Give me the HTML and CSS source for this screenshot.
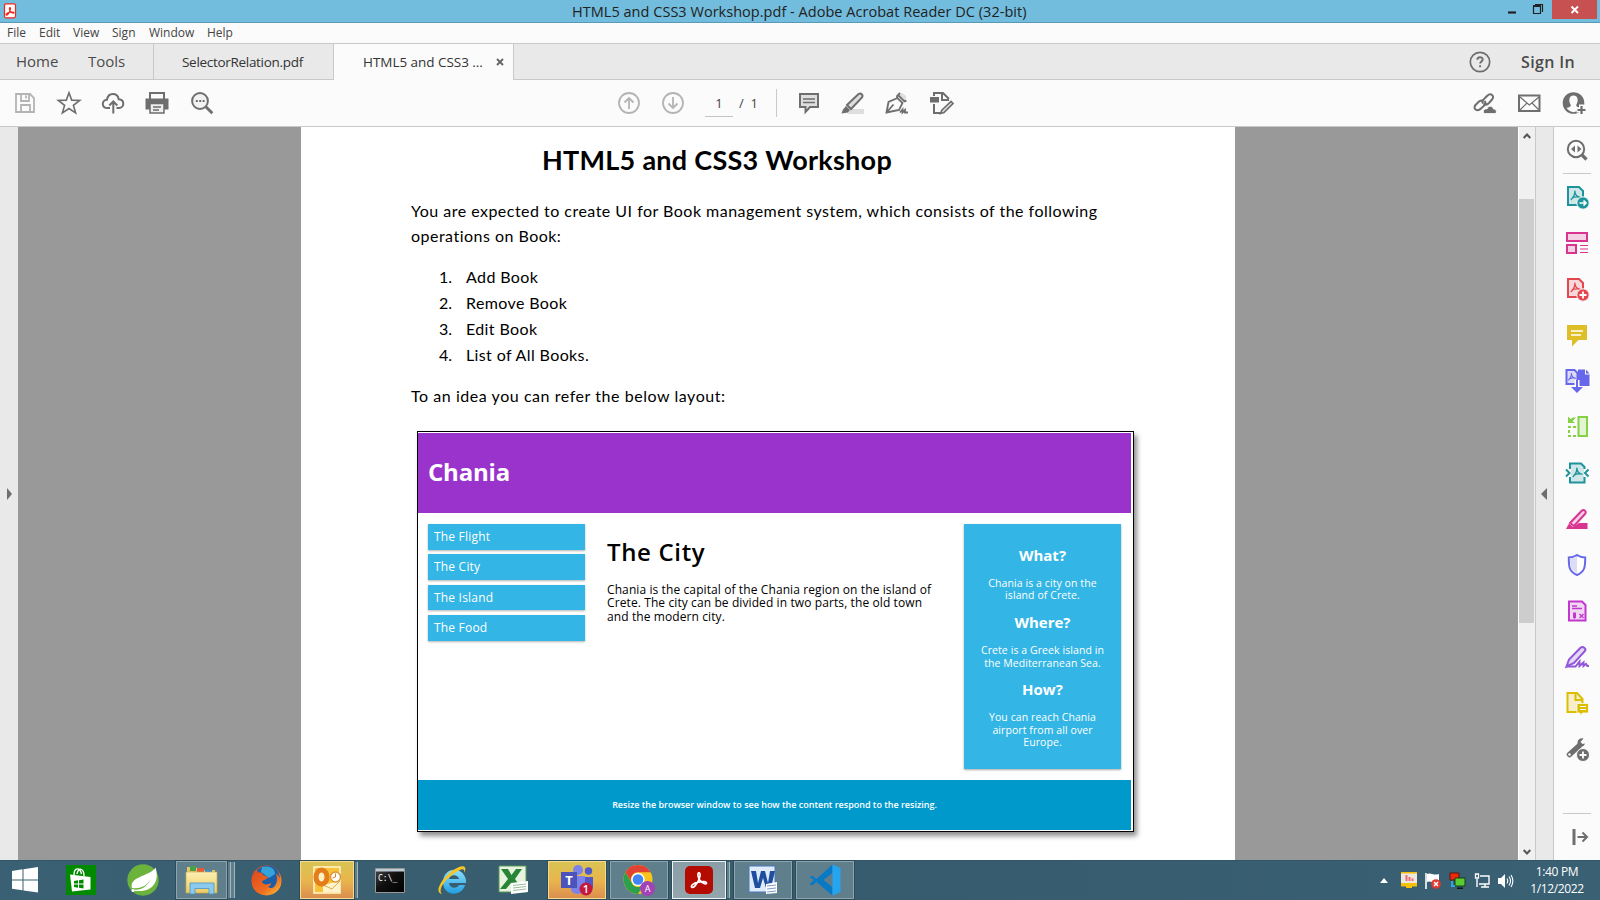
FILE: index.html
```html
<!DOCTYPE html>
<html lang="en">
<head>
<meta charset="utf-8">
<title>HTML5 and CSS3 Workshop.pdf - Adobe Acrobat Reader DC (32-bit)</title>
<link rel="stylesheet" href="styles.css">
</head>
<body>
<svg class="defs" width="0" height="0">
  <defs>
    <linearGradient id="ffx" x1="0" y1="0" x2="1" y2="1"><stop offset="0" stop-color="#e0491f"/><stop offset=".6" stop-color="#ee6b20"/><stop offset="1" stop-color="#fbc53a"/></linearGradient>
    <linearGradient id="ieb" x1="0" y1="0" x2="0" y2="1"><stop offset="0" stop-color="#8fe0fb"/><stop offset="1" stop-color="#1f9fe2"/></linearGradient>
    <linearGradient id="fold" x1="0" y1="0" x2="0" y2="1"><stop offset="0" stop-color="#fdf0b4"/><stop offset="1" stop-color="#eccb63"/></linearGradient>
    <linearGradient id="cmdg" x1="0" y1="0" x2="1" y2="1"><stop offset="0" stop-color="#4a4a4a"/><stop offset=".45" stop-color="#111"/><stop offset="1" stop-color="#000"/></linearGradient>
    <g id="acro"><path d="M12 5.2c1.500 0 1.300 3.600-.6 7.200-1.700 3.300-4.200 6.600-5.700 5.700-1.600-1 1.300-3.600 5.600-4.600 3.900-.9 7.700-.6 7.500.9-.2 1.500-3.800.3-6-2.600-1.900-2.500-2.300-6.600-.8-6.600z" fill="none"/></g>
    <g id="tri"><path d="M11.500 5c.5 4-.5 8-5.500 13M11.700 6c0 4 2.500 7.500 7.500 8.500M7.500 15.500c3-2 6-2.500 11.500-1.500" fill="none"/></g>
  </defs>
</svg>
<div class="titlebar">
  <svg class="app" width="12" height="16" viewBox="0 0 12 16"><rect x=".5" y=".8" width="11" height="14" rx="1.500" fill="#fff" stroke="#f0281c" stroke-width="1.200"/><use href="#acro" transform="translate(-1 1.500) scale(.58)" stroke="#f0281c" stroke-width="2"/></svg>
  <div class="caption">HTML5 and CSS3 Workshop.pdf - Adobe Acrobat Reader DC (32-bit)</div>
  <div class="winbtns">
    <svg width="44" height="22" viewBox="0 0 44 22"><path d="M0 12.500h8" stroke="#222" stroke-width="2.200"/><path d="M25.500 6.500h7v7h-7z M27 4.500h7.500V12" fill="none" stroke="#222" stroke-width="1.200"/><path d="M25 6h8" stroke="#222" stroke-width="2"/></svg>
    <div class="close"><svg width="10" height="10" viewBox="0 0 10 10"><path d="M1.500 1.500l6.500 6.500M8 1.500L1.500 8" stroke="#fff" stroke-width="1.900"/></svg></div>
  </div>
</div>
<div class="menubar"><span>File</span><span>Edit</span><span>View</span><span>Sign</span><span>Window</span><span>Help</span></div>
<div class="tabs">
  <div class="main"><span>Home</span><span>Tools</span></div>
  <div class="tab">SelectorRelation.pdf</div>
  <div class="tab active"><span>HTML5 and CSS3 ...</span><svg width="8" height="8" viewBox="0 0 8 8"><path d="M1 1l6 6M7 1L1 7" stroke="#666" stroke-width="1.900"/></svg></div>
  <div class="tabend">
    <svg width="22" height="22" viewBox="0 0 22 22"><circle cx="11" cy="11" r="9.700" fill="none" stroke="#6e6e6e" stroke-width="1.700"/><path d="M8.300 8.800c0-3.500 5.400-3.300 5.400-.3 0 2-2.600 2-2.600 4.100M11.100 14.300v2" fill="none" stroke="#6e6e6e" stroke-width="1.900"/></svg>
    <span>Sign In</span>
  </div>
</div>
<div class="toolbar">
  <svg class="i light" viewBox="0 0 24 24"><path d="M3 3h14l4 4v14H3z"/><path d="M8 3v7h8V3M13 4.500v3M8 21v-7h9v7"/></svg>
  <svg class="i" viewBox="0 0 24 24"><path d="M12 1.800l2.700 7.300 8 .3-6.300 4.900 2.200 7.500-6.600-4.300-6.600 4.300 2.200-7.500-6.300-4.900 8-.3z" stroke-width="1.600"/></svg>
  <svg class="i" viewBox="0 0 24 24"><path d="M9 17H6.500C.3 17 .3 9 6 8.700 7.300 1 16.500 1.500 17.700 8.200 24 8.500 23.500 17 18 17h-2.500M12.300 22.500V11M8.300 14.500l4-4 4 4"/></svg>
  <svg class="i" viewBox="0 0 24 24"><path d="M5 8V2h14v6"/><path d="M1.500 8.500h21v9h-3V13h-15v4.500h-3z" fill="#6e6e6e"/><path d="M5 12.500h14V22H5zM8 16h8M8 19h6" fill="#eee" stroke-width="1.500"/></svg>
  <svg class="i" viewBox="0 0 24 24"><circle cx="10" cy="10" r="7.900" fill="#f2f2f2"/><path d="M15.800 15.800l6.500 6.500" stroke-width="3"/><path d="M5.800 10h2M9.200 10h2M12.600 10h2"/></svg>
  <svg class="i light" viewBox="0 0 24 24"><circle cx="12" cy="12" r="10"/><path d="M12 18V7.500M7.500 11.500L12 7l4.500 4.500"/></svg>
  <svg class="i light" viewBox="0 0 24 24"><circle cx="12" cy="12" r="10"/><path d="M12 6v10.500M7.500 12.500L12 17l4.500-4.500"/></svg>
  <div class="pg">1</div>
  <div class="of">/&nbsp; 1</div>
  <div class="vsep"></div>
  <svg class="i" viewBox="0 0 24 24"><path d="M3 3h18v13h-8l-4.500 5v-5H3z" fill="#dedede"/><path d="M6 8h12M6 11.500h12" stroke-width="1.500"/></svg>
  <svg class="i" viewBox="0 0 24 24"><path d="M10 18h13v5H6z" fill="#dedede" stroke="none"/><path d="M6 14L17.500 3c2.500-1.500 5 1 3.500 3.500L10 18z" fill="#dedede"/><path d="M5 15l4 4-2 2.500-6.500 1 1.500-4z" fill="#6e6e6e" stroke="none"/></svg>
  <svg class="i" viewBox="0 0 24 24"><path d="M13 3l8 8V5l-4-3z" fill="#dedede" stroke="none"/><path d="M1.500 21.500L3.500 11l9-4 5 5-3.500 7zM1.500 21.500l7-8M12 7.500V5l3-3M13 4l6.500 6.500 2-1" stroke-width="1.800"/><path d="M15 21.500l2.500-3v3l2.500-2.500v2.500h3" stroke-width="1.800"/></svg>
  <svg class="i" viewBox="0 0 24 24"><path d="M5 5V2h9l6 6M13 2v7h7M5 13v9h6"/><rect x="1" y="6" width="9" height="5.500" fill="#6e6e6e" stroke="none"/><path d="M13 19l9-8.500 2 2-9 9-3.500 1z" stroke-width="1.700" fill="#dedede"/></svg>
  <svg class="i" viewBox="0 0 24 24"><path d="M11 12.500c-2-3 1-4 4-7.500 4-4 8 0 5 3.500l-3 3.500c-2 2-4 2-5.500.5M12.500 10c3 3 0 4-3.500 7.500-4 4-8.500 0-5.500-3.500L7 10.500c1.500-1.200 3-1.500 4.500-.5"/><path d="M12 22.500c-2-4 1.500-5 3-4.500 1.500-4 6-3 6.500 0 3 0 3.500 3 2 4.500z" fill="#6e6e6e" stroke="#fbfbfb" stroke-width=".8"/></svg>
  <svg class="i" viewBox="0 0 24 24"><path d="M2 4.500h20.500V20H2z"/><path d="M3 6l9.300 8L22 6M3 19l7-7M22 19l-7-7" stroke-width="1.200"/></svg>
  <svg class="i" viewBox="0 0 24 24"><circle cx="11.500" cy="12" r="9.800" fill="#6e6e6e"/><path d="M11.500 4.500c5 0 5 6 2.700 9.500 0 2 1.800 2 4.300 3-4 5.500-10 5.500-14 0 2.500-1 4.300-1 4.300-3-2.300-3.500-2.300-9.500 2.700-9.500z" fill="#fbfbfb" stroke="none"/><path d="M19.500 13.500V24M14.500 19h10" stroke="#fbfbfb" stroke-width="5"/><path d="M19.500 15v8M15.500 19h8" stroke-width="2.200"/></svg>
</div>
<div class="work">
  <div class="leftnav"><svg width="5" height="12" viewBox="0 0 5 12"><path d="M0 0l5 6-5 6z" fill="#6e6e6e"/></svg></div>
  <div class="canvas">
    <div class="page">
      <h1>HTML5 and CSS3 Workshop</h1>
      <p class="intro">You are expected to create UI for Book management system, which consists of the following<br>operations on Book:</p>
      <div class="ops"><b>1.</b><span>Add Book</span><b>2.</b><span>Remove Book</span><b>3.</b><span>Edit Book</span><b>4.</b><span>List of All Books.</span></div>
      <p class="idea">To an idea you can refer the below layout:</p>
      <div class="mock">
        <div class="mhead">Chania</div>
        <div class="mbody">
          <div class="mnav"><div>The Flight</div><div>The City</div><div>The Island</div><div>The Food</div></div>
          <div class="mcity"><h2>The City</h2><p>Chania is the capital of the Chania region on the island of<br>Crete. The city can be divided in two parts, the old town<br>and the modern city.</p></div>
          <div class="mside"><h3>What?</h3><p>Chania is a city on the<br>island of Crete.</p><h3>Where?</h3><p>Crete is a Greek island in<br>the Mediterranean Sea.</p><h3>How?</h3><p>You can reach Chania<br>airport from all over<br>Europe.</p></div>
        </div>
        <div class="mfoot">Resize the browser window to see how the content respond to the resizing.</div>
      </div>
    </div>
  </div>
  <div class="scroll">
    <svg width="8" height="6" viewBox="0 0 8 6"><path d="M.7 5L4 1.500 7.300 5" fill="none" stroke="#555" stroke-width="2"/></svg>
    <div class="track"><div class="thumb"></div></div>
    <svg width="8" height="6" viewBox="0 0 8 6"><path d="M.7 1L4 4.500 7.300 1" fill="none" stroke="#555" stroke-width="2"/></svg>
  </div>
  <div class="collapse"><svg width="6" height="12" viewBox="0 0 6 12"><path d="M6 0L0 6l6 6z" fill="#6e6e6e"/></svg></div>
  <div class="pane">
    <div class="c"><svg class="i" viewBox="0 0 24 24"><circle cx="11" cy="11" r="8.200"/><path d="M17 17l4.500 4.500" stroke-width="3.200"/><path d="M10 7.500v7L6 11zM12.500 7.500v7l4-3.500z" fill="#6e6e6e" stroke="none"/></svg></div>
    <hr>
    <div class="c teal"><svg class="i" viewBox="0 0 24 24"><path d="M3 2h11l4 4v14H3z" class="f"/><use href="#tri" transform="translate(1.500 2) scale(.72)" stroke-width="1.800"/><circle cx="18" cy="18" r="6.200" fill="currentColor" stroke="#fbfbfb" stroke-width="1"/><path d="M14.500 18H21M18.500 15.500L21 18l-2.500 2.500" stroke="#fff" stroke-width="1.700"/></svg></div>
    <div class="c pink"><svg class="i" viewBox="0 0 24 24"><path d="M2 2h20v8H2zM2 14h9v8H2z" class="f"/><path d="M15 14.500h8M15 18h8M15 21.500h8" stroke-width="1"/></svg></div>
    <div class="c red"><svg class="i" viewBox="0 0 24 24"><path d="M3 2h11l4 4v14H3z" class="f"/><use href="#tri" transform="translate(1.500 2) scale(.72)" stroke-width="1.800"/><circle cx="18" cy="18" r="6.200" fill="currentColor" stroke="#fbfbfb" stroke-width="1"/><path d="M14.500 18h7M18 14.500v7" stroke="#fff" stroke-width="1.800"/></svg></div>
    <div class="c yellow"><svg class="i" viewBox="0 0 24 24"><path d="M3 3h18v13h-8l-5 5v-5H3z" fill="currentColor"/><path d="M6 8h12M6 12h10" stroke="#fff" stroke-width="1.500"/></svg></div>
    <div class="c indigo"><svg class="i" viewBox="0 0 24 24"><path d="M1.500 1h8l3 3v11h-11z" class="f"/><use href="#tri" transform="translate(-.3 1) scale(.58)" stroke-width="1.800"/><path d="M13 .5h7v5h4.500V17H13z" class="s"/><path d="M21 .5v4h3.500z" class="s"/><path d="M12 11v12" stroke="#fff" stroke-width="5"/><path d="M12 11v8"/><path d="M6 18h12l-6 6z" class="s"/></svg></div>
    <div class="c green"><svg class="i" viewBox="0 0 24 24"><path d="M13.500 2H22v19h-8.500z" class="f"/><path d="M11 12H4v9h8" stroke-dasharray="3 2"/><path d="M3 1.500V8h7L7.500 6 11 2.500H8L5.500 4z" class="s"/></svg></div>
    <div class="c teal"><svg class="i" viewBox="0 0 24 24"><path d="M6 7h13v10H6z" fill="#cfe7e8" stroke="none"/><path d="M5 8V2.500h11L19.500 6v2M5 16v5.500h14.500V16" class="f"/><use href="#tri" transform="translate(3.500 3) scale(.72)" stroke-width="1.900"/><path d="M1 8.500L4.500 12 1 15.500M23.500 8.500L20 12l3.500 3.500"/></svg></div>
    <div class="c pink"><svg class="i" viewBox="0 0 24 24"><path d="M14 16h8.500v6H5z" class="s"/><path d="M5 16L16.500 4c2.500-2.500 5.500.5 3.500 3L9 19z" class="f"/><path d="M4 16.500l4.500 4L6 22H1z" class="s"/></svg></div>
    <div class="c indigo"><svg class="i" viewBox="0 0 24 24"><path d="M12 2c3 2 5.500 2.500 8.200 2.500 0 8 .3 14-8.200 17.500C3.500 18.500 3.800 12.500 3.800 4.500 6.500 4.500 9 4 12 2z" fill="#fff"/><path d="M12 3.500v17C5.500 17 5 12 5 5.500c2.500 0 5-.5 7-2z" fill="#dcdcf6" stroke="none"/></svg></div>
    <div class="c magenta"><svg class="i" viewBox="0 0 24 24"><path d="M4 2.500h13l3.500 3.500v15.500H4z" class="f"/><path d="M7 7h5M7 9.500h10M14.500 15l4 4M18.500 15l-4 4" stroke-width="1.400"/><path d="M8 13.500h3v5l-1.500 1.500L8 18.500z" class="s"/></svg></div>
    <div class="c violet"><svg class="i" viewBox="0 0 24 24"><path d="M1.500 21.500L4 14.500 15.500 2.800c2.500-2 6 .7 4.500 3.200L9 18z" class="f"/><path d="M1 21.500h9.500l4-5v4.500l4-3.500v3.500l2.500-2 1.500 2H24"/></svg></div>
    <div class="c gold"><svg class="i" viewBox="0 0 24 24"><path d="M2.500 2H12l5.500 6v13H2.500z" class="f"/><path d="M10.500 2v7h7"/><path d="M12 12.500h11.500V22h-6L15 24.500V22h-3z" fill="currentColor" stroke="#fbfbfb" stroke-width=".8"/><path d="M15 15.500h6M15 18.500h6" stroke="#fff" stroke-width="1.200"/></svg></div>
    <div class="c"><svg class="i" viewBox="0 0 24 24"><path d="M4.500 17.500L14 9" stroke-width="5.500" stroke-linecap="round"/><path d="M20 6.500c-1.500 5-8.500 4-7.500-1.200C13 2 16 .5 18.500 1.500L15.500 5l2 2z" class="s"/><circle cx="4.500" cy="17.500" r="1.200" fill="#fff" stroke="none"/><circle cx="18" cy="18" r="6.500" fill="#6e6e6e" stroke="#fbfbfb" stroke-width="1"/><path d="M14.500 18h7M18 14.500v7" stroke="#fff" stroke-width="1.800"/></svg></div>
    <hr class="low">
    <svg class="i out" viewBox="0 0 24 24"><path d="M9 4v16" stroke-width="3"/><path d="M12.500 12h9M17.500 7.500L22 12l-4.500 4.500"/></svg>
  </div>
</div>
<div class="taskbar">
  <div class="apps">
    <div class="t"><svg width="28" height="28" viewBox="0 0 28 28"><path d="M1 5l10.500-1.700v10.200H1zM12.500 3.200L27 1v12.500H12.500zM1 14.500h10.500v9.800L1 22.800zM12.500 14.500H27V26.500l-14.500-2z" fill="#fff"/></svg></div>
    <div class="t"><svg width="30" height="30" viewBox="0 0 30 30"><path d="M0 0h30v30H0z" fill="#008a00"/><path d="M8 10c0-8 6-8 7.500-1M11 9c1-7 7-6 7 2" fill="none" stroke="#fff" stroke-width="1.400"/><path d="M4 9.500l20.500 2.500v12.500L6 26.500z" fill="#fff"/><path d="M8 16l4-.7v3.200H8zM13 15.200l4.500-.7v4H13zM8 19.500h4v3.200L8 22zM13 19.500h4.500v4l-4.500-.7z" fill="#008a00"/></svg></div>
    <div class="t"><svg width="32" height="32" viewBox="0 0 32 32"><circle cx="16" cy="16" r="15.700" fill="#6cb33e"/><path d="M28.500 3.500C33 17 26 30 6 26.500-1 12 23 13 28.500 3.500z" fill="#fff"/><path d="M3 24.500c6 2.500 15 2 21-9.500-5 8-12 10-18.500 9z" fill="#6cb33e"/><circle cx="6" cy="26.500" r="1.500" fill="#fff"/></svg></div>
    <div class="t b stack2"><svg width="34" height="32" viewBox="0 0 34 32"><path d="M2 3h9l2 3h17v22H2z" fill="#e5c763"/><path d="M5 2h6v5H5z" fill="#45a14a"/><path d="M12 4h7v4h-7z" fill="#e45c3c"/><path d="M20 6h7v4h-7z" fill="#3688d8"/><path d="M1 8h31v21H1z" fill="url(#fold)" stroke="#cba84a" stroke-width=".7"/><path d="M5 30V19h24v11h-5v-5.500H10V30z" fill="#8acbed" stroke="#4895c6" stroke-width=".8"/></svg></div>
    <div class="t"><svg width="31" height="31" viewBox="0 0 31 31"><circle cx="15.500" cy="15.500" r="15" fill="url(#ffx)"/><path d="M6 5C14-3 26 1 28 9c3 9-3 15-9 14l-9-5z" fill="#1e5da8"/><path d="M11 2c7-2 13 1 13 7l-6 4-8-6z" fill="#36a2da"/><path d="M3 6l3 2c3-2 6 0 6 2l5 2c-1 3-6 3-6 5 2 4 7 2 9 1 0 4-5 5-8 4 8 6 17-2 13-14 6 6 7 12 1 18C18 33 0 31 1 15z" fill="url(#ffx)"/></svg></div>
    <div class="t b hot stack1"><svg width="32" height="32" viewBox="0 0 32 32"><path d="M3 3h26v26H3z" fill="#f8c238" stroke="#fff6cf" stroke-width="1.500"/><path d="M12 21l17-4v11H12z" fill="#fff3cc"/><path d="M12 21l9 4 8-8" fill="none" stroke="#deab4c"/><ellipse cx="10.500" cy="13" rx="5.500" ry="7" fill="#fff0c0" stroke="#e37d1c" stroke-width="5"/><circle cx="24.500" cy="13" r="5" fill="#fff" stroke="#dd963a" stroke-width="1.500"/><path d="M24.500 9.500V13l-3 1" fill="none" stroke="#d8802a"/></svg></div>
    <div class="t"><svg width="30" height="25" viewBox="0 0 30 25"><path d="M.5.500h29v24H.5z" fill="url(#cmdg)" stroke="#999"/><path d="M1 1h28v2.500H1z" fill="#bfcbd4"/><text x="3" y="12.500" class="con">C:\_</text></svg></div>
    <div class="t"><svg width="31" height="31" viewBox="0 0 31 31"><path d="M29 18H12c1 6 8 6 10 2h6c-3 12-22 12-22-3s20-17 23-2zM12 14h10c-1-5-9-5-10 0z" fill="url(#ieb)"/><path d="M5 29C-5 27 8 8 22 2c6-2 8 1 5 6 1-4-1-5-6-2C10 12 0 24 5 29z" fill="#f4c525"/></svg></div>
    <div class="t"><svg width="31" height="30" viewBox="0 0 31 30"><path d="M1 1h27v26H1z" fill="#e8f3df" stroke="#5a9956"/><path d="M3 4h7l3.500 6L18 4h6l-7 10 7 10h-7l-4-6-5 6H2l8-10z" fill="#288536"/><path d="M13 18l17-2v11l-17 2z" fill="#fff"/><path d="M15 20.500l13-1.500M15 23l13-1.500M15 25.500L28 24" stroke="#9bbc99"/></svg></div>
    <div class="t b hot"><svg width="34" height="32" viewBox="0 0 34 32"><circle cx="18" cy="6" r="5" fill="#7b83eb"/><circle cx="28.500" cy="7" r="3.700" fill="#5059c9"/><path d="M24 13h9v10c0 4-7 5-9 2z" fill="#5059c9"/><path d="M11 12h14v13c0 6-14 7-14 0z" fill="#7b83eb"/><path d="M1 8h16v16H1z" fill="#4b53bc"/><text x="9" y="20.500" class="tt">T</text><circle cx="26" cy="25" r="6.500" fill="#c4183c"/><text x="26" y="29" class="tn">1</text></svg></div>
    <div class="t b"><svg width="34" height="32" viewBox="0 0 34 32"><circle cx="16" cy="15.500" r="14.500" fill="#f9c51d"/><path d="M3.400 8.300A14.500 14.500 0 0 1 28.600 8.300H16a7 7 0 0 0-6.100 10.500z" fill="#e24234"/><path d="M3.400 8.300A14.500 14.500 0 0 0 16 30l6.200-10.500a7 7 0 0 1-12.400-.5z" fill="#2da04d"/><circle cx="16" cy="15.500" r="6.700" fill="#fff"/><circle cx="16" cy="15.500" r="5.300" fill="#4285f4"/><circle cx="25.500" cy="24.500" r="7.500" fill="#a142b5"/><text x="25.500" y="27.500" class="ta">A</text></svg></div>
    <div class="t b cur stack1"><svg width="28" height="28" viewBox="0 0 28 28"><rect width="28" height="28" rx="5" fill="#b30b00"/><use href="#acro" transform="translate(.5 1) scale(1.120)" stroke="#fff" stroke-width="1.500"/></svg></div>
    <div class="t b"><svg width="31" height="30" viewBox="0 0 31 30"><path d="M1 1h26v26H1z" fill="#dfeafa" stroke="#4a79b8"/><path d="M3 6h5l2 12 3-12h4l3 12 2-12h5l-4 17h-5l-3-10-3 10H7z" fill="#1e4f9e"/><path d="M18 19l11-2v11l-11 1z" fill="#fff"/><path d="M19 21l9-1M19 24l9-1M19 27l9-1" stroke="#7b9bcb"/></svg></div>
    <div class="t b"><svg width="32" height="32" viewBox="0 0 32 32"><path d="M23.500.5L7.500 15 3 11.500.5 13l4.500 3-4.500 4 2.500 1.500L7.500 18l16 13.500V23l-9-7 9-7z" fill="#0879c4"/><path d="M23.500.5L31.500 4v24l-8 3.500z" fill="#25a5ef"/></svg></div>
  </div>
  <div class="tray">
    <svg width="8" height="5" viewBox="0 0 8 5"><path d="M0 5l4-5 4 5z" fill="#fff"/></svg>
    <svg width="16" height="17" viewBox="0 0 16 17"><path d="M0 0h16v14H0z" fill="#eee7df"/><path d="M0 0h16v1.500H0zM0 11h16v3.500h-5V16H5v-1.500H0z" fill="#f5bf0a"/><path d="M5.500 3v6M8.500 5v4M11.500 6.500V9" stroke="#f06a72" stroke-width="2"/></svg>
    <svg width="16" height="16" viewBox="0 0 16 16"><path d="M1 0v16" stroke="#fff" stroke-width="1.600"/><path d="M2 1c4-2 6 2 12 0v8C8 11 6 7 2 9z" fill="#fff"/><circle cx="11" cy="11" r="4.800" fill="#e0392d"/><path d="M9 9l4 4M13 9l-4 4" stroke="#fff" stroke-width="1.500"/></svg>
    <svg width="17" height="16" viewBox="0 0 17 16"><path d="M1 0h9v7H1z" fill="#f0290c" stroke="#5b160d"/><path d="M6 5h10v8H6z" fill="#58cc31" stroke="#173d13"/><path d="M8 15.200h6" stroke="#111" stroke-width="1.500"/><path d="M3 8v5h3" stroke="#2ba7e5" stroke-width="2" fill="none"/></svg>
    <svg width="16" height="16" viewBox="0 0 16 16"><path d="M6 3h9v8H5M7 14h8M11 11v3M3 6v8" fill="none" stroke="#fff" stroke-width="1.400"/><path d="M1.500 1h3v4h-3z" fill="none" stroke="#fff" stroke-width="1.300"/></svg>
    <svg width="16" height="14" viewBox="0 0 16 14"><path d="M0 4h3l4-4v14l-4-4H0z" fill="#fff"/><path d="M9 4.500c1 1.500 1 3.500 0 5M11 2.500c2 3 2 6 0 9M13 1c2.500 4 2.500 8 0 12" fill="none" stroke="#fff" stroke-width="1.100"/></svg>
    <div class="clock"><span>1:40 PM</span><span>1/12/2022</span></div>
  </div>
</div>
</body>
</html>
```
FILE: styles.css
```css
* { box-sizing: border-box; }
body { margin: 0; width: 1600px; height: 900px; overflow: hidden; background: #fbfbfb; font-family: "Open Sans", sans-serif; color: #444; display: flex; flex-direction: column; white-space: nowrap; }
svg { display: block; flex: none; overflow: visible; }
.defs { position: absolute; }
h1, h2, h3, p, hr { margin: 0; }

.titlebar { height: 23px; flex: none; background: #72bcdd; border-bottom: 1px solid #589ab6; display: grid; grid-template-columns: 572px 1fr 89px; grid-template-rows: 22px; }
.app { margin: 3px 0 0 4px; }
.caption { font-size: 14.500px; line-height: 23px; color: #222; letter-spacing: .03px; }
.winbtns { display: flex; margin-left: -3px; }
.close { width: 45px; height: 19px; background: #c75050; display: flex; align-items: center; justify-content: center; flex: none; }

.menubar { height: 21px; flex: none; border-bottom: 1px solid #c9c9c9; display: grid; grid-template-columns: 32px 34px 39px 37px 58px 60px; padding-left: 7px; font-size: 12px; line-height: 20px; }

.tabs { height: 36px; flex: none; background: #e9e9e9; display: flex; color: #4b4b4b; }
.main { width: 153px; border-bottom: 1px solid #c9c9c9; padding-left: 16px; font-size: 15px; line-height: 35px; display: grid; grid-template-columns: 72px 1fr; }
.tab { width: 180px; border-left: 1px solid #c9c9c9; border-bottom: 1px solid #c9c9c9; font-size: 13.500px; line-height: 36px; color: #333; letter-spacing: -.3px; padding-left: 28px; }
.tab.active { width: 181px; letter-spacing: -.04px; background: #fbfbfb; border-bottom: 0; border-right: 1px solid #c9c9c9; display: flex; align-items: center; justify-content: space-between; padding: 0 9px 0 29px; }
.tabend { flex: 1; border-bottom: 1px solid #c9c9c9; display: flex; justify-content: flex-end; align-items: center; padding-right: 25px; font-size: 16px; font-weight: 600; letter-spacing: .35px; gap: 30px; }

.toolbar { height: 47px; flex: none; border-bottom: 1px solid #c9c9c9; display: grid; grid-template-columns: 44px 44px 44px 45px 427.500px 44px 44px 33px 38px 21px 44px 44px 44px 543px 45px 45px 38px; align-items: center; padding-left: 12.500px; }
.i { width: 24px; height: 24px; fill: none; stroke: #6e6e6e; stroke-width: 2; }
.i.light { stroke: #b4b4b4; stroke-width: 1.800; }
.pg { width: 28px; height: 28px; border-bottom: 1px solid #c4c4c4; text-align: center; font-size: 13px; line-height: 28px; }
.of { font-size: 13px; line-height: 28px; padding-left: 1px; }
.vsep { width: 1px; height: 28px; background: #c9c9c9; }

.work { height: 733px; flex: none; display: flex; }
.leftnav { width: 18px; background: #e9e9e9; display: flex; align-items: center; padding-left: 6.500px; }
.canvas { width: 1500px; background: #999; padding-left: 283px; }
.page { width: 934px; height: 733px; background: #fff; padding: 17px 0 0 110px; font-family: Lato, sans-serif; font-size: 16px; color: #000; overflow: hidden; }
.page h1 { font-size: 27px; line-height: 31px; font-weight: 700; padding-left: 131px; letter-spacing: .27px; }
.intro { line-height: 25px; margin-top: 23px; letter-spacing: .48px; }
.ops { display: grid; grid-template-columns: 27px 1fr; line-height: 26px; margin-top: 16px; padding-left: 28px; letter-spacing: .38px; }
.ops b { font-weight: 400; letter-spacing: 0; }
.idea { line-height: 25px; margin-top: 15px; letter-spacing: .55px; }

.mock { width: 717px; height: 401px; margin: 23px 0 0 6px; border: 1px solid #000; padding: 1px 2px 1px 0; box-shadow: 3px 4px 5px rgba(0,0,0,.45); font-family: "Open Sans", sans-serif; display: flex; flex-direction: column; }
.mhead { height: 80px; background: #9933cc; color: #fff; font-size: 24px; font-weight: 700; line-height: 77px; padding-left: 10px; letter-spacing: -.2px; }
.mbody { height: 267px; display: grid; grid-template-columns: 157px 335px 157px; gap: 22px; padding: 11px 10px; }
.mnav { display: flex; flex-direction: column; gap: 4.700px; }
.mnav div { height: 25.700px; background: #33b5e5; color: #fff; font-size: 12px; line-height: 25px; padding-left: 6px; letter-spacing: .2px; box-shadow: 0 1px 2px rgba(0,0,0,.3); }
.mcity h2 { font-size: 24px; font-weight: 600; line-height: 32px; margin-top: 12px; letter-spacing: .65px; }
.mcity p { font-size: 12px; line-height: 13.700px; margin-top: 14.500px; letter-spacing: .1px; }
.mside { height: 245px; background: #33b5e5; color: #fff; text-align: center; box-shadow: 0 1px 2px rgba(0,0,0,.35); padding-top: 21px; }
.mside h3 { font-size: 15px; font-weight: 700; line-height: 20px; }
.mside p { font-size: 10.500px; line-height: 12.400px; margin: 12px 0 10.400px; letter-spacing: .08px; }
.mfoot { height: 50px; background: #0099cc; color: #fff; text-align: center; font-size: 9px; font-weight: 600; line-height: 50px; letter-spacing: -.01px; }

.scroll { width: 17px; background: #f0f0f0; border-left: 1px solid #fff; display: flex; flex-direction: column; align-items: center; padding: 6px 1px 5px 0; }
.track { flex: 1; width: 15px; padding-top: 60px; }
.thumb { height: 424px; background: #cdcdcd; }
.collapse { width: 19px; background: #e9e9e9; border-left: 1px solid #c9c9c9; border-right: 1px solid #c9c9c9; display: flex; align-items: center; padding-left: 5px; }
.pane { width: 46px; display: flex; flex-direction: column; align-items: center; }
.c { height: 46px; flex: none; display: flex; align-items: center; color: #6e6e6e; }
.c .i { stroke: currentColor; }
.s { fill: currentColor; stroke: none; }
.pane hr { width: 28px; height: 1px; border: 0; background: #c9c9c9; flex: none; }
.pane hr.low { margin-top: 41px; }
.out { margin-top: 11px; }
.teal { color: #1d949b; } .teal .f { fill: #cfe7e8; }
.pink { color: #d93590; } .pink .f { fill: #f5d1e4; }
.red { color: #e34850; } .red .f { fill: #f8d9db; }
.yellow { color: #dfbf28; }
.indigo { color: #6767ec; } .indigo .f { fill: #dcdcf6; }
.green { color: #85d044; } .green .f { fill: #e2f4d4; }
.magenta { color: #c038cc; } .magenta .f { fill: #f2d7f5; }
.violet { color: #9256d9; } .violet .f { fill: #e4d8f5; }
.gold { color: #dcbd00; } .gold .f { fill: #f6efca; }

.taskbar { height: 40px; flex: none; background: linear-gradient(90deg, #3a6173, #365b6d 50%, #3a6074); display: flex; justify-content: space-between; color: #fff; border-top: 1px solid #335666; }
.apps { display: grid; grid-template-columns: 50px 62px 62px 60px 65px 59px 63px 62px 65px 62px 62px 62px 62px 62px; grid-template-rows: 38px; }
.t { display: flex; align-items: center; justify-content: center; height: 38px; }
.t:nth-child(4) { margin-left: 2px; }
.t:nth-child(6) { margin-left: 1px; }
.t:nth-child(9) { margin-right: 5px; }
.b { width: 58px; border: 1px solid #8ea3ad; background: #607f8d; outline: 1px solid #2d4b59; }
.stack1 { width: 54px; box-shadow: 4px 0 0 -1px #607f8d, 5px 0 0 -1px #a3b5bd; }
.stack2 { width: 51px; box-shadow: 4px 0 0 -1px #607f8d, 5px 0 0 -1px #a3b5bd, 8px 0 0 -1px #607f8d, 9px 0 0 -1px #a3b5bd; }
.hot { background: linear-gradient(#d8c455, #e9b64c 50%, #dc8f50); border-color: #f3dc92; }
.cur { background: linear-gradient(#8a9ea7, #93a6ae); border-color: #eef3f5; }
.con { font: 8px "DejaVu Sans Mono", monospace; fill: #fff; }
.tt { font: 700 13px "Open Sans", sans-serif; fill: #fff; text-anchor: middle; }
.tn { font: 600 11px "Open Sans", sans-serif; fill: #fff; text-anchor: middle; }
.ta { font: 400 9px "Open Sans", sans-serif; fill: #fff; text-anchor: middle; }
.tray { display: flex; align-items: center; gap: 8px; }
.tray > svg:first-child { margin-right: 5px; }
.clock { width: 86px; margin-left: -8px; display: flex; flex-direction: column; align-items: center; font-size: 12px; line-height: 16.500px; letter-spacing: -.35px; }
```
